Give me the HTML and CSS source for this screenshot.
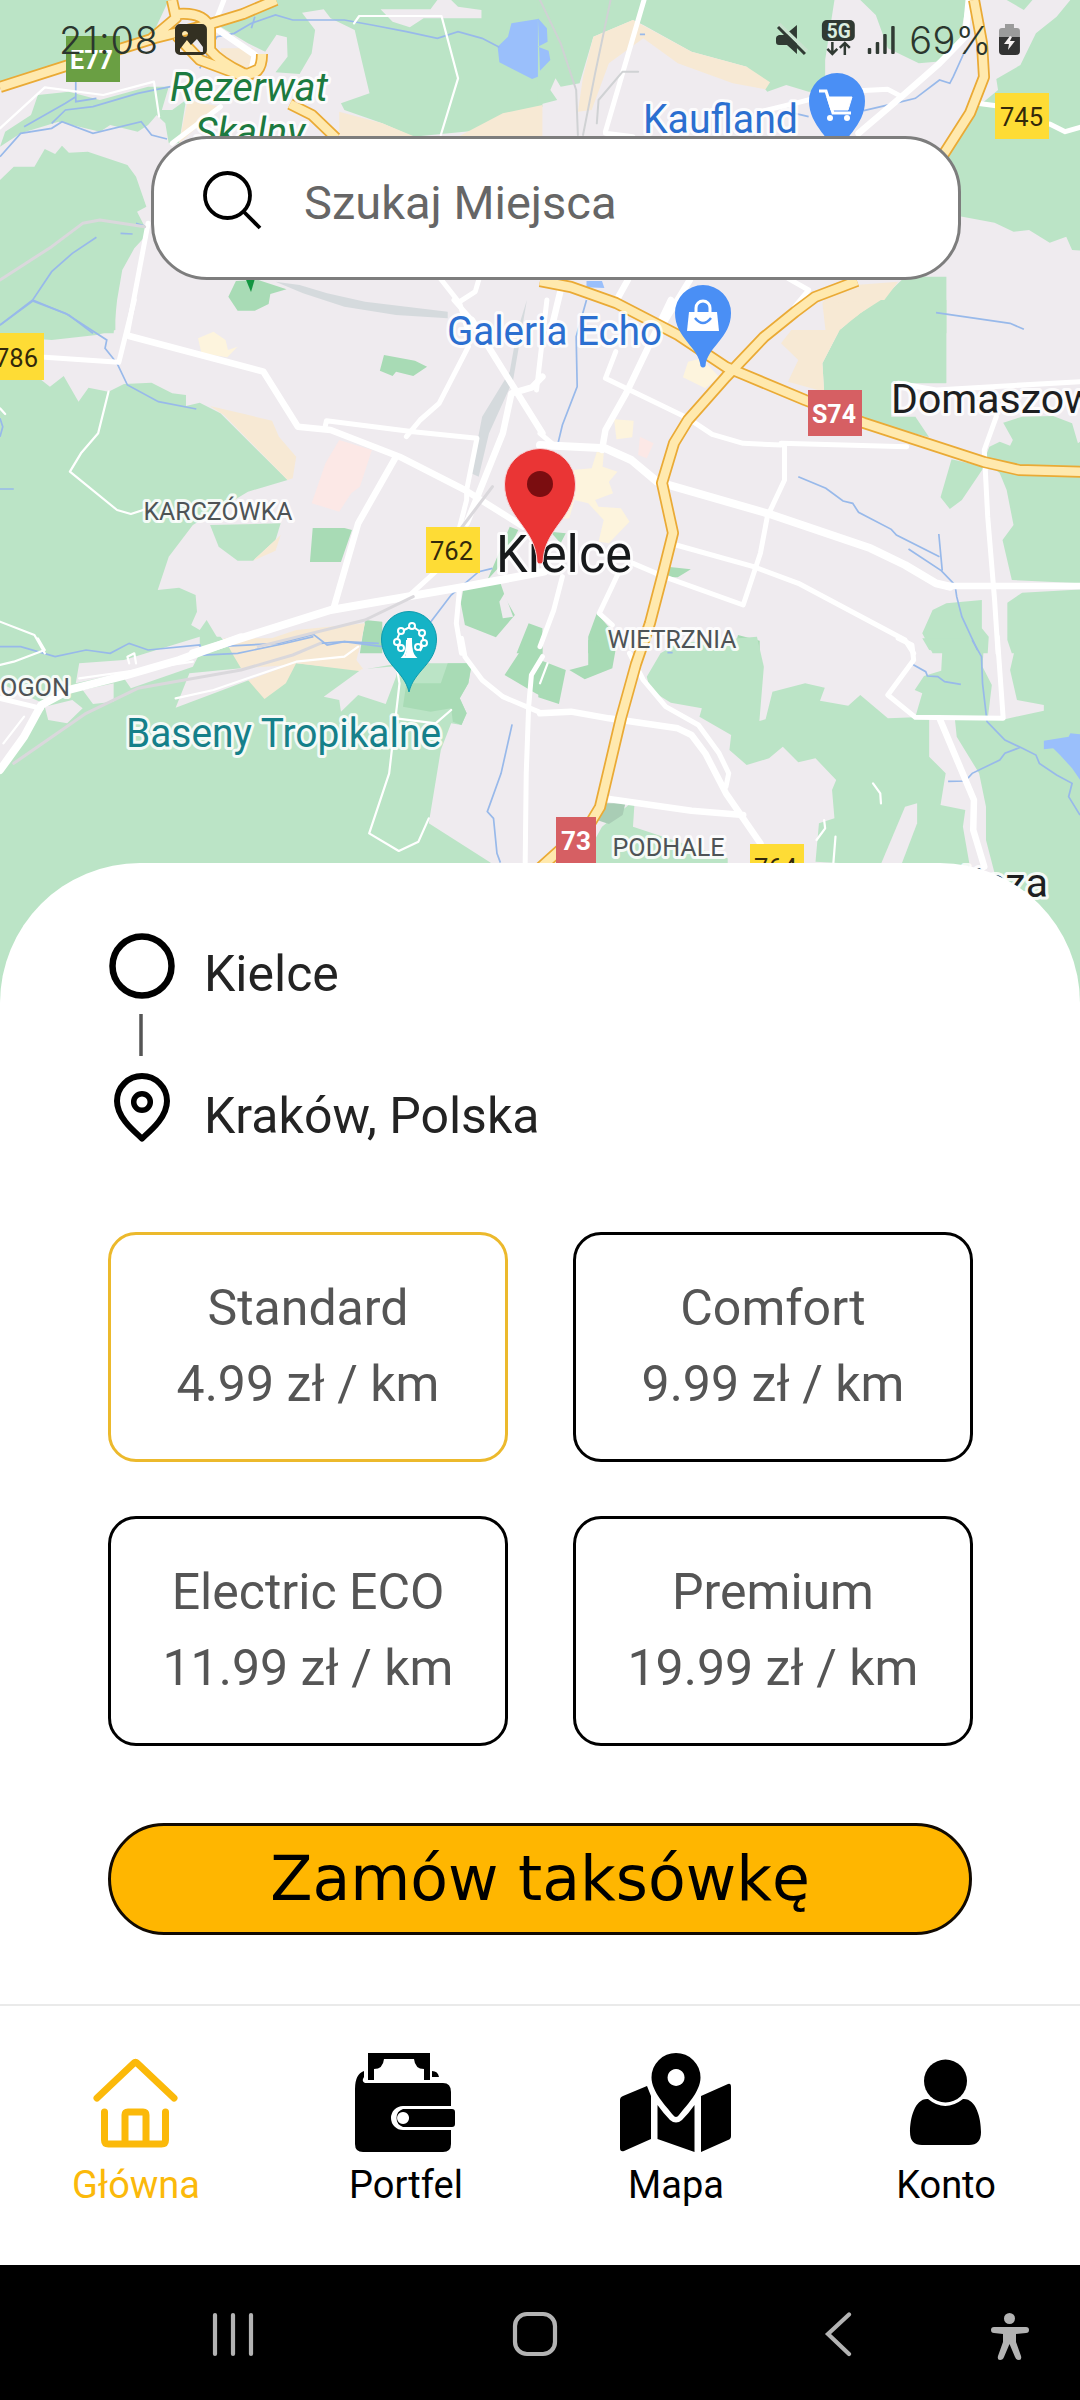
FILE: index.html
```html
<!DOCTYPE html>
<html lang="pl">
<head>
<meta charset="utf-8">
<title>Zamów taksówkę</title>
<link rel="stylesheet" href="styles.css">
</head>
<body>
<div class="screen">
  <section class="map">
    <svg class="map-canvas" viewBox="0 0 1080 1010" width="1080" height="1010">
      <!-- Parks, fields and built-up land, tile by tile -->
      <g transform="scale(.34439 .33333)">
        <path class="green" d="M0 0H490L440 110 0 250z"/>
        <path class="green" d="M800 0H1270L1250 28H1105L1140 65 1190 82 1230 55H1398V30L1330 20 1310 0H1575V320L1400 390 1200 410 1110 370 1000 330 990 310 1073 280 1050 180 1030 90 960 55 940 28 877 38 915 90 905 160 870 222 800 217 835 170 833 112 803 104 770 155 720 130 640 80z"/>
        <path class="green" d="M0 440L15 395 90 345 110 285 200 275 290 300 430 260 490 260 470 330 500 330 540 300 520 430H490L480 370 455 345 430 375 400 395 320 375 290 395 170 365 60 400z"/>
        <path class="green" d="M0 540L40 500H100L130 447 160 462 180 437 200 458 255 455 370 495 395 530 425 620 398 635 430 700 390 745 355 810 340 900 330 1000H0z"/>
        <path class="beige" d="M640 145L735 145 730 200 650 205zM545 300L640 320 520 430zM985 335L1110 370 1205 410H985zM1330 410L1460 340 1575 315V410z"/>
        <path class="water" d="M1485 70L1575 55V225L1545 237 1450 187 1445 140 1475 110z"/>
        <path class="park" d="M685 843L750 840 832 868 785 882 780 912 740 932 690 932 663 890z"/>
        <path class="rail" d="M800 845L870 855 950 880 1060 905 1300 935V955L1150 945 1000 920 880 880z"/>
      </g>
      <g transform="translate(540) scale(.34439 .33333)">
        <path class="green" d="M-6 0H855L828 180V275H780L715 255 660 275 600 200 440 155 300 75 270 60 155 110 115 250 60 260 45 235 30 270 50 300 -6 315z"/>
        <path class="beige" d="M270 60L440 155 600 200 668 247 655 268 560 250 400 190 300 115 200 190 150 330 110 335 125 230 155 110z"/>
        <path class="water" d="M-6 55L20 85 22 125-6 140 25 152 30 180 0 212z"/>
        <path class="green" d="M930 0H1240L1215 140 1150 185 1100 190 1010 145 975 45zM1355 0H1430L1405 30z"/>
        <path class="green" d="M1540 0H1575V752L1545 750 1528 710 1480 728 1420 690 1375 695 1320 668 1215 648 1180 470 1260 330 1330 270 1325 237 1395 195 1440 100 1500 50z"/>
        <path class="green" d="M1060 830H1180V1000H870L900 960 1000 890z"/>
        <path class="beige" d="M850 860L1040 845 985 920 880 970 870 1000H830L820 910z"/>
        <path class="water" d="M135 843H180L187 864 135 862z"/>
      </g>
      <g transform="translate(0 300) scale(.34439 .33333)">
        <path class="green" d="M0-5H335V90L280 105 150 120 0 108z"/>
        <path class="green" d="M0 230L120 240 145 260 185 228 228 305 257 263 315 275 360 252 440 248 500 280 540 285V318L580 308 640 340 835 540 720 575 560 675 490 770 458 870 520 863 568 885 572 935 555 975 580 990 600 960 635 1020V1060H0z"/>
        <path class="green" d="M610 675L815 670 800 720 735 782H690L635 740z"/>
        <path class="beige" d="M610 318L790 362 810 410 860 470 850 535 835 540 650 345zM815 705L800 752 735 782z"/>
        <path class="cream" d="M575 115L620 95 655 120 662 150 690 140 660 172 585 160z"/>
        <path class="pink" d="M985 420L1080 450 1045 560 1020 580 985 635 905 610 945 490z"/>
        <path class="park" d="M1115 165L1205 182 1240 200 1200 228 1150 215 1140 228 1103 212zM908 684H1000L1022 690 990 786H900zM1345 870L1450 840 1470 900 1495 945 1440 1012 1350 975 1338 910zM1535 970L1575 985V1060H1500zM1480 680L1505 690 1450 800 1415 840 1440 780zM1060 960L1110 965V1060H1045z"/>
        <path class="land" d="M1465 880L1490 950 1460 955 1450 905z"/>
        <path class="beige" d="M860 990L1060 970 1040 1060H660z"/>
        <path class="rail" d="M1530 0L1490 240 1420 400 1390 530 1368 520 1400 350 1480 215 1500 100z"/>
      </g>
      <g transform="translate(540 300) scale(.34439 .33333)">
        <path class="green" d="M990 0H1180V250L1090 350 1130 412 940 360 825 275 820 190 870 90 930 40z"/>
        <path class="beige" d="M830 10L985 0 930 40 870 90 820 190 825 275 720 245 750 180 700 130 730 90 850 90z"/>
        <path class="land" d="M1020 250H1200V350H1020z"/>
        <path class="green" d="M1345 368L1400 350 1490 348 1545 370 1562 430 1575 420V850L1370 840 1343 720 1375 675 1355 570 1335 520 1290 480 1305 440 1335 425 1365 437 1373 420zM1195 478L1290 500 1225 600 1190 627 1163 592zM1110 1000L1140 930 1180 910 1283 900V985L1303 1010 1300 1060H1140zM1357 908L1400 878 1575 868V1060H1370L1357 1020z"/>
        <path class="park" d="M370 800L438 808 400 832H360zM165 940L215 1000 210 1060H140V1010zM575 1005L638 1022V1060H560zM30 695L75 700 60 730z"/>
        <path class="cream" d="M95 510L150 505 165 455 185 460 182 500 225 515 200 545 212 580 160 600 170 620 235 625 260 665 200 730 170 725 185 660 140 610 100 600 85 655 40 660zM215 358L272 362 268 412 222 418zM430 185L470 175 520 230 480 265 415 232z"/>
        <path class="pink" d="M290 410L330 430 310 475 285 465z"/>
      </g>
      <g transform="translate(0 640) scale(.34439 .33333)">
        <path class="green" d="M0-10H640L700 60 860 70 1050 90 1160 70H1370L1360 130 1335 175 1355 220 1340 255 1310 250 1280 330 1245 550 1425 668V1110H0z"/>
        <path class="park" d="M1180 130H1280L1300 70H1370L1360 130 1335 175 1355 220 1340 255 1315 245 1310 205 1250 215 1170 200zM1465 105L1535-5H1575V170L1555 160z"/>
        <path class="beige" d="M650-5H1050L1035 60 1060 95 860 70 830 130 768 177 720 120 680 50z"/>
        <path class="land" d="M0 130L125 190 60 310 0 400zM230 70L360 60 580-10 580 40 560 80 380 145 350 100 220 130zM550 100L700 85 840 75 510 203zM130 200L210 180 240 205 195 250 140 240zM940 170L1050 88 1155 78 1150 110 1120 192 1040 165 990 215 985 180zM240 150L330 130V185L270 192z"/>
      </g>
      <g transform="translate(540 640) scale(.34439 .33333)">
        <path class="green" d="M310 110L350 40 400 10 630-10 650 80 637 243 655 238 675 155 770 130 827 143 813 182 895 197 930 165 1010 235 1130 230V350L1178 400 1163 495 1235 510 1228 560 1250 690 800 665 810 550 855 535 848 450 860 420 800 355 750 367 705 320 665 355 600 375 550 330 555 285 463 230 470 205 380 188 320 150z"/>
        <path class="green" d="M1205 240H1340L1463 212V195L1385 180 1365 90 1385 0H1575V1110L1320 700 1295 600V500L1275 400 1210 290zM1110-5H1290L1285 80 1312 135 1300 237 1090 230 1110 160 1088 150 1115 108 1165 92 1168 35 1130 30zM180 560L275 480 270 560 545 655V672H120z"/>
        <path class="land" d="M1060 500L1095 490V550L1050 672H990z"/>
        <path class="park" d="M0 60L75 90 55 192-5 172zM140 0L222 15 210 85 130 118 85 90 140 75z"/>
        <path class="water" d="M1463 302L1535 290 1540 280 1575 283V430L1545 385 1510 345 1490 325 1463 328z"/>
        <path class="shade" d="M185 490H248L240 525 200 552 165 540z"/>
      </g>

      <!-- Streams -->
      <g class="stream" transform="scale(.34439 .33333)">
        <path d="M730 85L740 50M580 205L630 110 680 100 730 70 800 45 850 60 1000 60 1080 75 1180 95 1270 115 1330 95 1400 115 1450 142M70 380L190 310 220 290M220 240V305L280 295M150 370L190 330 270 320 400 280 495 260M0 470L60 400 150 385 180 365 270 400 410 365 440 405 485 417M0 975L95 900 150 815 210 760 280 712M95 900L200 945 270 1000M350 700L385 702M395 670L420 678"/>
      </g>
      <g class="stream" transform="translate(540) scale(.34439 .33333)">
        <path d="M1235 150L1200 230 1190 250 1160 240 1090 295 1030 310 940 332M1150 938L1365 970 1405 988M290 103H305M740 340L780 350"/>
      </g>
      <g class="stream" transform="translate(0 300) scale(.34439 .33333)">
        <path d="M0 75L95 3 190 40 310 120 305 145 340 190 370 255 460 305 570 327M0 567H40M0 355L8 380 0 410M630 1040L810 1030 910 1003 950 1035 1000 1025 1100 1030M1430 805L1390 815 1310 885 1240 980"/>
      </g>
      <g class="stream" transform="translate(540 300) scale(.34439 .33333)">
        <path d="M135 0L105 110 108 260 65 375 50 440M750 530L830 565 880 603 908 610 925 637 1020 688 1035 705 1160 770M1158 702L1168 812M1070 747L1165 812 1205 855 1210 890 1225 950 1270 1050"/>
      </g>
      <g class="stream" transform="translate(0 640) scale(.34439 .33333)">
        <path d="M0 20L60 20 160 50 250 30 320 40 375 10 430 30 580 15 590 45 690 40 820 12 910-10M930 10L1000 5 1110 20M1487 253L1455 400 1415 515 1433 535 1443 640 1453 668"/>
      </g>
      <g class="stream" transform="translate(540 640) scale(.34439 .33333)">
        <path d="M1255 0L1282 50 1285 130 1298 245 1350 300 1395 322 1440 345 1450 370 1500 405 1545 430 1535 470 1568 525M1395 322L1350 340 1335 360 1255 400 1235 423 1185 424M1080 72L1120 95 1125 108 1155 110 1175 125 1222 133M370 38H385"/>
      </g>

      <!-- Minor roads -->
      <g class="road" transform="scale(.34439 .33333)">
        <path class="w2" d="M0 385L130 262 300 285 447 245 462 350M1028 70L1043 48H1282L1330 235 1280 405"/>
        <path class="w4" d="M650 0L620 80M500 430L640 320M430 670L370 1000M1278 835L1335 910 1360 1000M1335 905L1380 875 1390 840"/>
        <path class="w6" d="M620 80L740 165 730 215"/>
        <path class="trail" d="M0 840L150 740 240 670 290 660 420 680"/>
      </g>
      <g class="road" transform="translate(540) scale(.34439 .33333)">
        <path class="w4" d="M302 0L190 395M640 335L760 305 870 275 1010 268 1050 290M1270 310L1330 318M1480 372L1525 395 1568 382M190 400L270 410M720 835L780 870 740 920"/>
        <path class="w6" d="M1245 0L1235 110 1160 190 1050 290 925 400M60 870L30 1000M255 840L220 905M435 840L340 1000"/>
        <path class="thin-grey" d="M0 0L60 130 105 270 110 405M205 0L160 220 125 405M285 215L240 215 170 300 165 370"/>
      </g>
      <g class="road" transform="translate(0 300) scale(.34439 .33333)">
        <path class="w2" d="M315 275L285 400 235 460 203 515 340 630 380 642 430 625M0 965L100 1005 130 1060M0 325L15 342"/>
        <path class="w4" d="M130 172L345 187 390 0M1360 140L1275 310 1220 360 1180 410M943 385L948 362 1200 395 1385 415 1355 570 1355 600 1335 680M1318 0L1370 60M1185 890L1270 810M1335 860L1325 970 1340 1060"/>
        <path class="w6" d="M375 108L765 215 865 380 960 390 1160 470 1350 570 1520 680M1150 470L1040 670 970 920M1370 60L1575 400M1575 230L1545 262 1485 280 1460 400 1355 670"/>
        <path class="w8" d="M560 1060L960 930 1350 860 1580 815"/>
        <path class="trail" d="M750 1040L1060 960 1200 890M1430 560L1335 690"/>
      </g>
      <g class="road" transform="translate(540 300) scale(.34439 .33333)">
        <path class="w4" d="M220 155L190 235 430 355 500 403 590 430 700 435M700 430L1065 440M710 435V540L660 650 640 760 590 915 360 830 270 790M395 735L620 800 750 850 1060 1020 1085 1060M65 830L40 930 0 1040M225 825L172 940 210 975M1325 350L1290 450 1300 650 1320 900 1330 1060M1040 250L1150 270 1568 245M20 0L-10 270M0 400L40 435"/>
        <path class="w6" d="M380 0L250 280 190 390 180 450M1180 858H1568"/>
        <path class="w8" d="M0 435L190 445 265 480 340 545 660 640 960 745 1060 795 1150 850 1190 860"/>
      </g>
      <g class="road" transform="translate(0 640) scale(.34439 .33333)">
        <path class="w2" d="M1150 70L1160 130 1130 400 1072 580 1158 633 1215 605 1245 535M1150 235L1265 250 1310 210M0 75L40 65 130 30 110-5M510 175L620 150 860 65 1000 50 1040 20M375 70L370 50 390 40 395 70M230 115L400 90 560 65M70 230L10 310"/>
        <path class="w4" d="M1340-5L1350 50 1400 120 1460 170 1575 220M1575 50L1543 105 1535 200 1528 400 1525 668M0 175L120 205"/>
        <path class="w8" d="M700-8L520 60 370 105 200 150 120 195 70 290 0 390"/>
        <path class="trail" d="M40 370L250 220 400 145 700 90 850 45 930 10"/>
      </g>
      <g class="road" transform="translate(540 640) scale(.34439 .33333)">
        <path class="w2" d="M967 430L988 460 990 490M825 540L828 565 803 600M858 590L852 668M22 70L0 130"/>
        <path class="w4" d="M260 40L300 120 365 200 460 255 520 340 548 400 540 440M1040-5L1080 15 1085 60 1010 165 1090 232 1345 235 1328-10"/>
        <path class="w6" d="M0 220L90 215 200 235 400 265 440 285 480 340 540 460 640 610M185 475L440 512 590 525M1160 235L1260 480 1258 570 1290 680"/>
      </g>

      <!-- Main roads: casing, then fill -->
      <g class="casing">
        <path d="M0 87L72 64 155 38 207 25 243 14 276 0M172 0L176 18 150 40M178 14Q204 12 210 28V50Q220 62 243 73 262 78 262 54M177 36L200 60 243 76 257 70M290 104L312 115 336 138M974 0L982 43 984 77 970 113 940 160 935 180M540 281L571 287 616 303 678 335 726 367 805 400 864 423 984 462 1019 470 1085 472M857 281L815 297 795 312 764 337 726 377 688 420 674 443 662 483 673 533 662 577 650 623 636 664 621 718 600 807 591 822 540 868"/>
      </g>
      <g class="fill">
        <path d="M0 87L72 64 155 38 207 25 243 14 276 0M172 0L176 18 150 40M178 14Q204 12 210 28V50Q220 62 243 73 262 78 262 54M177 36L200 60 243 76 257 70M290 104L312 115 336 138M974 0L982 43 984 77 970 113 940 160 935 180M540 281L571 287 616 303 678 335 726 367 805 400 864 423 984 462 1019 470 1085 472M857 281L815 297 795 312 764 337 726 377 688 420 674 443 662 483 673 533 662 577 650 623 636 664 621 718 600 807 591 822 540 868"/>
      </g>

      <!-- Road shields -->
      <path fill="#6a9f43" d="M66 36h54v46H66z"/>
      <path fill="#fedc35" d="M995 93h54v46h-54zM0 333h44v47H0zM426 527h54v46h-54zM750 844h54v46h-54z"/>
      <path fill="#d65f63" d="M808 390h54v46h-54zM556 817h40v46h-40z"/>
      <g class="shield light">
        <text x="70" y="69" textLength="43" lengthAdjust="spacingAndGlyphs">E77</text>
        <text x="812" y="423" textLength="44" lengthAdjust="spacingAndGlyphs">S74</text>
        <text x="561" y="850" textLength="30" lengthAdjust="spacingAndGlyphs">73</text>
      </g>
      <g class="shield">
        <text x="1000" y="126" textLength="43" lengthAdjust="spacingAndGlyphs">745</text>
        <text x="-5" y="367" textLength="43" lengthAdjust="spacingAndGlyphs">786</text>
        <text x="430" y="560" textLength="43" lengthAdjust="spacingAndGlyphs">762</text>
        <text x="754" y="877" textLength="43" lengthAdjust="spacingAndGlyphs">764</text>
      </g>

      <!-- Place names -->
      <g class="label">
        <g class="nature">
          <text x="170" y="100.500" textLength="158" lengthAdjust="spacingAndGlyphs">Rezerwat</text>
          <text x="195" y="146" textLength="110" lengthAdjust="spacingAndGlyphs">Skalny</text>
        </g>
        <g class="shop">
          <text x="643" y="132.500" textLength="155" lengthAdjust="spacingAndGlyphs">Kaufland</text>
          <text x="447" y="344.500" textLength="215" lengthAdjust="spacingAndGlyphs">Galeria Echo</text>
        </g>
        <text class="leisure" x="126" y="746.500" textLength="315" lengthAdjust="spacingAndGlyphs">Baseny Tropikalne</text>
        <g class="district">
          <text x="143.500" y="520" textLength="149" lengthAdjust="spacingAndGlyphs">KARCZÓWKA</text>
          <text x="607.500" y="647.500" textLength="129" lengthAdjust="spacingAndGlyphs">WIETRZNIA</text>
          <text x="0" y="695.500" textLength="70" lengthAdjust="spacingAndGlyphs">OGON</text>
          <text x="612.500" y="856" textLength="112" lengthAdjust="spacingAndGlyphs">PODHALE</text>
        </g>
        <g class="town">
          <text x="891" y="412.500">Domaszow</text>
          <text x="1048" y="896.500" text-anchor="end">Mójcza</text>
        </g>
        <text class="city" x="496" y="571.500" textLength="136" lengthAdjust="spacingAndGlyphs">Kielce</text>
      </g>

      <!-- Pins -->
      <path fill="#129540" d="M244 275h12l-5 17z"/>
      <g fill="#4a8ff5">
        <path d="M837 156C833 140 809 126 809 101a28 28 0 0 1 56 0C865 126 841 140 837 156z"/>
        <path d="M700.500 366C699 347 675 338 675 313a28 28 0 0 1 56 0C731 338 707 347 705.500 366q-2.500 3-5 0z"/>
      </g>
      <g fill="none" stroke="#fff" stroke-width="3">
        <path d="M819 91h7l7 22h18"/>
        <path fill="#fff" stroke-width="1" d="M827 97h25l-4 13h-17z"/>
        <path stroke-width="3" d="M696 313v-5a7 7 0 0 1 14 0v5"/>
      </g>
      <path fill="#fff" d="M689 312h28l2 19h-32z"/>
      <path fill="none" stroke="#4a8ff5" stroke-width="2.500" d="M695 318q8 10 16 0"/>
      <circle cx="830" cy="118" r="3" fill="#fff"/><circle cx="847" cy="118" r="3" fill="#fff"/>
      <path fill="#15b3c6" stroke="#0f9bad" d="M409 692C404 670 381.500 664 381.500 639a27.500 27.500 0 0 1 55 0C436.500 664 414 670 409 692z"/>
      <g fill="none" stroke="#fff" stroke-width="2">
        <path d="M403 657q4-4 4-16h4q0 12 4 16zM400 650l-4-8 4-10 12-6 10 7 2 10-4 8" />
        <g fill="#15b3c6"><circle cx="397" cy="642" r="3"/><circle cx="401" cy="631" r="3"/><circle cx="412" cy="626" r="3"/><circle cx="422" cy="633" r="3"/><circle cx="424" cy="643" r="3"/><circle cx="418" cy="647" r="3"/><circle cx="401" cy="648" r="3"/></g>
        <path fill="#fff" stroke="none" d="M404 658q4-6 3-20h5q-1 14 3 20z"/>
      </g>
      <path fill="#ea3535" stroke="#f6d5d8" d="M537 562C536 528 504.500 518 504.500 484a35.500 35.500 0 0 1 71 0C575.500 518 544 528 543 562q-3 4-6 0z"/>
      <circle cx="540" cy="484" r="13" fill="#7b0d10"/>
    </svg>

    <header class="status">
      <span class="clock">21:08</span>
      <svg class="gallery" width="32" height="32" viewBox="0 0 32 32"><path fill="#333022" fill-rule="evenodd" d="M5 0h22a5 5 0 0 1 5 5v21a5 5 0 0 1-5 5H5a5 5 0 0 1-5-5V5a5 5 0 0 1 5-5zM5 25l7-9 4 5 6-6 6 8v5H5zM10 7a3 3 0 1 0 .1 0z"/></svg>
      <svg class="signals" width="120" height="40" viewBox="0 0 120 40">
        <g fill="#303a33">
          <path d="M0 18q0-2 3-3h6L21 5v29L11 25H3q-3 0-3-3z"/>
          <path stroke="#c9e2cf" stroke-width="3.500" d="M3 4l28 27"/>
          <path stroke="#303a33" stroke-width="3" d="M2 7l27 27"/>
          <rect x="46" y="0" width="33" height="21" rx="5"/>
          <rect x="92" y="28" width="3.500" height="6" rx="1"/><rect x="100" y="22" width="3.500" height="12" rx="1"/><rect x="107.500" y="14" width="3.500" height="20" rx="1"/><rect x="115.500" y="6" width="3.500" height="28" rx="1"/>
        </g>
        <path fill="none" stroke="#303a33" stroke-width="2.500" d="M56.500 22v12m-5-5l5 5 5-5M69 35V23m-5 5l5-5 5 5"/>
        <text class="net" x="51" y="18" textLength="24" lengthAdjust="spacingAndGlyphs">5G</text>
      </svg>
      <span class="percent">69%</span>
      <svg class="battery" width="22" height="32" viewBox="0 0 22 32"><path fill="#9b9b9b" d="M6 0h9v4h3q3 0 3 3v6H0V7q0-3 3-3h3z"/><path fill="#333" d="M0 13h21v14a4 4 0 0 1-4 4H4a4 4 0 0 1-4-4z"/><path fill="#f5f0f0" d="M11 12L5 20h5l-1 6 7-9h-5l2-4z"/></svg>
    </header>

    <div class="search">
      <svg width="60" height="60" viewBox="0 0 60 60" fill="none" stroke="#000" stroke-width="3.800"><circle cx="25.500" cy="25.500" r="22.500"/><path d="M41 41L58 58"/></svg>
      <span class="placeholder">Szukaj Miejsca</span>
    </div>
  </section>

  <main class="sheet">
    <div class="route">
      <svg class="route-marks" width="68" height="212" viewBox="0 0 68 212" fill="none" stroke="#000">
        <circle cx="34" cy="34" r="29.500" stroke-width="6.500"/>
        <path stroke="#555" stroke-width="3.500" d="M33 82v42"/>
        <path stroke-width="6" stroke-linejoin="round" d="M34 206.500C27 200 9 186 9 169a25 25 0 0 1 50 0c0 17-18 31-25 37.500z"/>
        <circle cx="34" cy="170" r="8.300" stroke-width="5.500"/>
      </svg>
      <div class="stops">
        <span>Kielce</span>
        <span>Kraków, Polska</span>
      </div>
    </div>

    <div class="fares">
      <div class="fare selected"><span>Standard</span><span>4.99 zł / km</span></div>
      <div class="fare"><span>Comfort</span><span>9.99 zł / km</span></div>
      <div class="fare"><span>Electric ECO</span><span>11.99 zł / km</span></div>
      <div class="fare"><span>Premium</span><span>19.99 zł / km</span></div>
    </div>

    <button class="order">Zamów taksówkę</button>
  </main>

  <nav class="tabs">
    <a class="tab active">
      <svg width="120" height="100" viewBox="0 0 120 100" fill="none" stroke="currentColor" stroke-width="7" stroke-linecap="round" stroke-linejoin="round"><path d="M22 45L59 10q1.500-1.500 3 0L99 45M29.500 59v28q0 4 4 4h53q4 0 4-4V59M50 90V62q0-3 3-3h15q3 0 3 3v28"/></svg>
      <span>Główna</span>
    </a>
    <a class="tab">
      <svg width="120" height="100" viewBox="0 0 120 100">
        <path d="M24 0h61v27h-6V16q-9 0-10-10H39q-1 10-10 10v11h-6V0z"/>
        <path d="M19 18v6q-3 4 1 6h78q8 0 8 9v14H58a12 12 0 0 0 0 24h48v14q0 8-8 8H18q-8 0-8-8V36q0-15 9-18zM87 18q6 0 7 6h-7z"/>
        <path fill-rule="evenodd" d="M58 56h49q3 0 3 3v12q0 3-3 3H58a9.500 9.500 0 0 1 0-18zM58 59a6 6 0 1 0 .1 0z"/>
      </svg>
      <span>Portfel</span>
    </a>
    <a class="tab">
      <svg width="120" height="100" viewBox="0 0 120 100">
        <path fill-rule="evenodd" d="M61 0A24.500 24.500 0 0 1 85.500 24.500C85.500 39 70 54 64 62q-3 4-6 0C52 54 36.500 39 36.500 24.500A24.500 24.500 0 0 1 61 0zm0 16a8.500 8.500 0 1 0 .1 0z"/>
        <path d="M32 33l4 10v43L9 98q-4 1-4-3V47q0-3 3-4zM42.500 52Q49 61 55 67q6 5 12 0 7-7 12.500-15v47l-37-13zM86 43l27-12q3-1 3 3v49q0 3-3 4L86 99z"/>
      </svg>
      <span>Mapa</span>
    </a>
    <a class="tab">
      <svg width="120" height="100" viewBox="0 0 120 100"><circle cx="60.500" cy="28" r="21.500"/><path d="M43 46q17 14 35 0c13-1 18 19 18 33q0 13-12 13H37q-12 0-12-13c0-14 5-34 18-33z"/></svg>
      <span>Konto</span>
    </a>
  </nav>

  <footer class="system">
    <svg width="1080" height="135" viewBox="0 0 1080 135" fill="none" stroke="#b3b3b3" stroke-width="4.200" stroke-linecap="round">
      <path d="M215 50v39M233 50v39M251 50v39M849 49.500L828 69l21 20"/>
      <rect x="515" y="49" width="40" height="40" rx="12"/>
      <circle cx="1009.500" cy="53.500" r="5.500" fill="#b3b3b3" stroke="none"/>
      <path fill="#b3b3b3" stroke="none" d="M994 62h32q3 0 3 3t-3 3l-10 1v8l5 14q1 4-2 4t-4-3l-5.500-13-5.500 13q-1 3-4 3t-2-4l5-14v-8l-9-1q-3 0-3-3t3-3z"/>
    </svg>
  </footer>
</div>
</body>
</html>
```

FILE: styles.css
```css
* { box-sizing: border-box; }

body {
  margin: 0;
  background: #fff;
  font-family: Roboto, "Liberation Sans", sans-serif;
}

.screen {
  width: 1080px;
  height: 2400px;
  display: flex;
  flex-direction: column;
  overflow: hidden;
}

/* Map */
.map {
  position: relative;
  flex: none;
  height: 1010px;
  background: #efebef;
}
.map-canvas { display: block; overflow: hidden; }
.map-canvas path { vector-effect: non-scaling-stroke; }
.green { fill: #bbe4c6; }
.park { fill: #a8dbb5; }
.beige { fill: #f7e9d4; }
.cream { fill: #fdf4dd; }
.pink { fill: #fce8e6; }
.water { fill: #9abffb; }
.rail { fill: #d5dadd; }
.shade { fill: #a9cdb5; }
.land { fill: #efebef; }
.stream { fill: none; stroke: #98b9ea; stroke-width: 1.7px; }
.road { fill: none; stroke: #fff; stroke-linejoin: round; stroke-linecap: round; }
.w2 { stroke-width: 2.2px; }
.w4 { stroke-width: 5px; }
.w6 { stroke-width: 6.5px; }
.w8 { stroke-width: 8px; }
.trail { stroke: #dad8dc; stroke-width: 3px; }
.thin-grey { stroke: #d0d2d4; stroke-width: 2px; }
.casing { fill: none; stroke: #eaaa35; stroke-width: 12px; stroke-linejoin: round; }
.fill { fill: none; stroke: #ffe9ae; stroke-width: 8.5px; stroke-linejoin: round; }
.shield { font-size: 26px; fill: #33290a; }
.shield.light { font-weight: 700; fill: #fff; }
.label { paint-order: stroke; stroke: rgba(255, 255, 255, .85); stroke-width: 6px; stroke-linejoin: round; font-size: 41px; }
.nature { font-style: italic; fill: #1c7a40; }
.shop { fill: #2b6fd0; }
.leisure { fill: #15808a; }
.district { font-size: 26.5px; fill: #4e5356; }
.town { fill: #1d1f21; }
.city { font-size: 51px; fill: #17191b; }

/* Status bar */
.status {
  position: absolute;
  inset: 0 0 auto 0;
  height: 80px;
  padding: 0 59px;
  display: flex;
  align-items: center;
  color: #2b362e;
}
.clock, .percent {
  font-family: Inter, Roboto, sans-serif;
  font-weight: 300;
  font-size: 38px;
  line-height: 80px;
}
.clock { width: 116px; letter-spacing: .8px; }
.signals { margin-left: 569px; }
.net { font: 700 21px Roboto, sans-serif; fill: #dcefe1; }
.percent { width: 90px; margin-left: 14px; letter-spacing: .3px; }

/* Search field */
.search {
  position: absolute;
  left: 151px;
  top: 136px;
  width: 810px;
  height: 144px;
  padding: 0 48px;
  display: flex;
  align-items: center;
  gap: 42px;
  background: #fff;
  border: 3px solid #7d7d7d;
  border-radius: 56px;
}
.search svg { margin-top: -16px; }
.placeholder { font-size: 47px; line-height: 60px; margin-top: -10px; color: #666; }

/* Order sheet */
.sheet {
  position: relative;
  flex: none;
  height: 1141px;
  margin-top: -147px;
  padding: 69px 107px 0 108px;
  background: #fff;
  border-radius: 140px 140px 0 0;
}
.route { display: flex; height: 212px; }
.stops {
  display: flex;
  flex-direction: column;
  padding: 13px 0 0 28px;
  font-size: 50px;
  line-height: 58px;
  gap: 84px;
  color: #232323;
}
.fares {
  display: grid;
  grid-template-columns: 400px 400px;
  justify-content: space-between;
  gap: 54px 0;
  margin-top: 88px;
}
.fare {
  height: 230px;
  padding-top: 35px;
  display: flex;
  flex-direction: column;
  align-items: center;
  font-size: 50px;
  line-height: 76px;
  color: #555;
  border: 3px solid #000;
  border-radius: 28px;
}
.fare.selected { border-color: #ecb92c; }
.order {
  display: block;
  width: 864px;
  height: 112px;
  margin: 77px 0 0;
  padding: 0;
  background: #ffb600;
  border: 3px solid #110a02;
  border-radius: 56px;
  font: 61.7px/98px "DejaVu Sans", sans-serif;
  color: #000;
}

/* Tab bar */
.tabs {
  flex: none;
  display: grid;
  grid-template-columns: repeat(4, 1fr);
  height: 261px;
  padding-top: 47px;
  border-top: 2px solid #eaeaea;
  background: #fff;
}
.tab {
  display: flex;
  flex-direction: column;
  align-items: center;
  gap: 10px;
  font-size: 38px;
  line-height: 44px;
  color: #000;
}
.tab span { padding-left: 2px; }
.tab svg { fill: #000; }
.tab.active { color: #fbb90a; }
.tab.active svg { fill: none; }

/* Android navigation bar */
.system { flex: none; height: 135px; background: #000; }
.system svg { display: block; }
```
